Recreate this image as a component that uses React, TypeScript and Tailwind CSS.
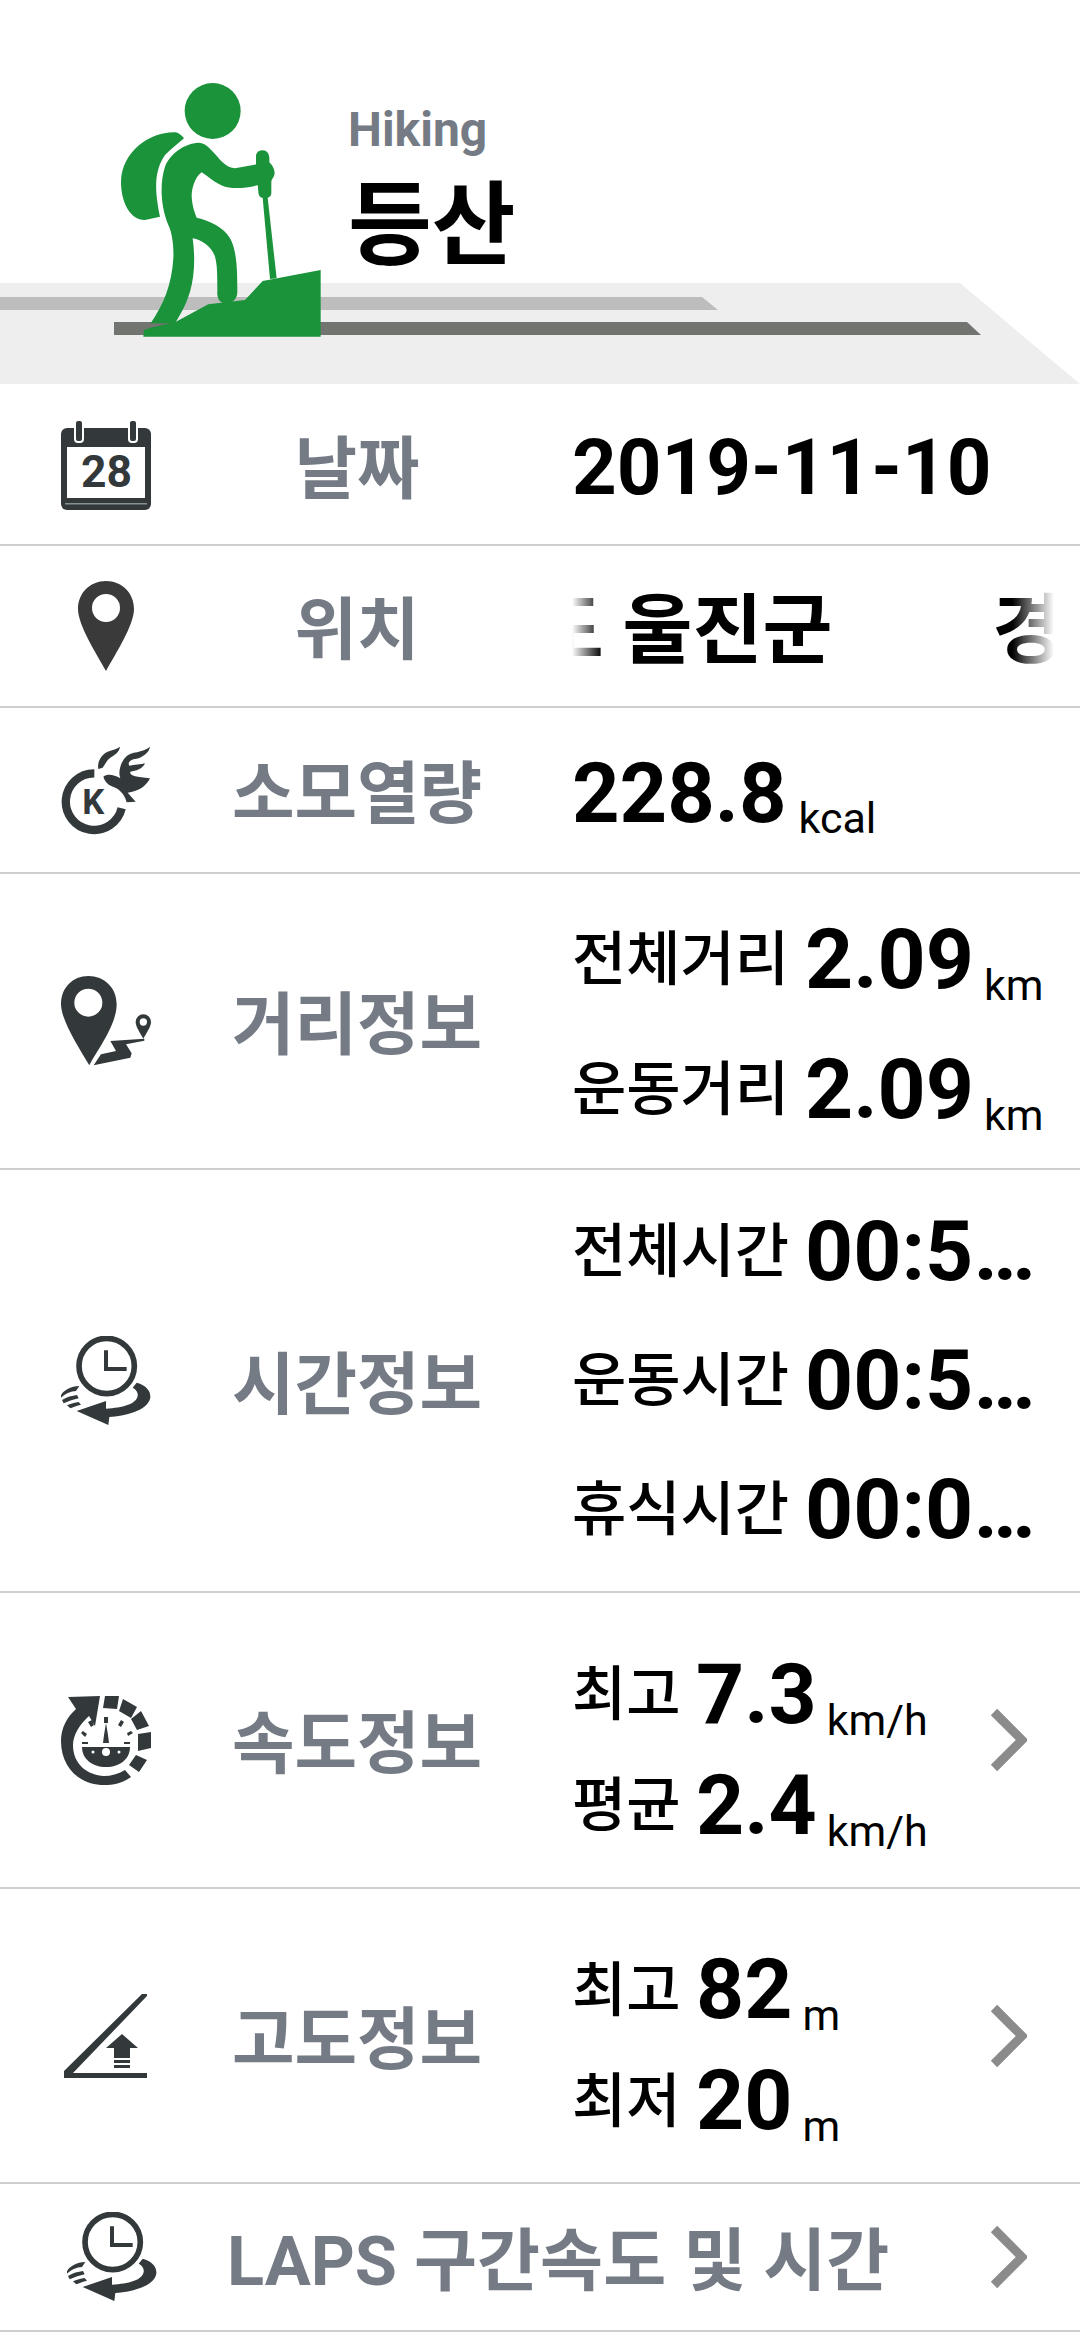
import React from "react";

const ink = "#33393b";

const ClockIcon = () => (
  <svg viewBox="0 0 270 270" className="w-[90px] h-[90px]" fill={ink}>
    <circle cx="137" cy="90" r="83" fill="none" stroke={ink} strokeWidth="17" />
    <path d="M129 43h12v50h56v12h-68z" />
    <path d="M227 140c28 8 43 24 41 45-8 40-78 55-123 58l-3 24-95-42 88-30v23c50-3 90-13 95-38 2-10-5-20-15-25z" />
    <path d="M0 178c5-13 30-28 55-28l-10 15c-15 0-35 10-45 20zM3 192c15-9 30-13 45-15l5 10c-15 3-30 8-45 15zM18 208c10-5 25-9 35-10l7 8c-12 3-24 7-32 11z" />
  </svg>
);

const Calendar = () => (
  <svg viewBox="0 0 90 90" className="w-[90px] h-[90px]">
    <path d="M6 8h78a6 6 0 0 1 6 6v70a6 6 0 0 1-6 6H6a6 6 0 0 1-6-6V14a6 6 0 0 1 6-6z" fill={ink} />
    <rect x="6" y="27" width="78" height="51" fill="#fff" />
    <rect x="14" y="0" width="8" height="22" rx="3" fill={ink} stroke="#fff" strokeWidth="2" />
    <rect x="68" y="0" width="8" height="22" rx="3" fill={ink} stroke="#fff" strokeWidth="2" />
    <rect x="4" y="83" width="82" height="1.5" fill="#8a8f90" />
    <text x="20" y="67" fontFamily="Roboto, sans-serif" fontWeight="700" fontSize="44" textLength="51" lengthAdjust="spacingAndGlyphs" fill={ink}>28</text>
  </svg>
);

const Pin = () => (
  <svg viewBox="0 0 56 90" className="w-[56px] h-[90px]">
    <path d="M28 0C12 0 0 12 0 28c0 16 18 44 28 62C38 72 56 44 56 28 56 12 44 0 28 0zm0 41a14 14 0 1 1 0-28 14 14 0 0 1 0 28z" fill="#3a3a3a" />
  </svg>
);

const Fire = () => (
  <svg viewBox="0 0 270 270" className="w-[90px] h-[90px]" fill={ink}>
    <path d="M100 85A85 85 0 1 0 182 190" fill="none" stroke={ink} strokeWidth="25" />
    <path d="M112 72c-4-17 6-42 28-52 15-6 28-8 37-15-2 17-17 25-29 33-10 7-14 17-23 30z" />
    <path d="M127 95c13-10 33-5 51 5-8-20 2-50 17-65 15-17 50-10 72-30-2 17-22 33-45 37-17 3-22 13-17 20 15-2 35-4 47-7-7 17-27 23-44 25-3 12 17 15 59 20-12 25-37 40-67 43l24 27-27 2c-7-27-25-42-45-48-12-6-22-16-25-29z" />
    <text x="97" y="208" textAnchor="middle" fontFamily="Roboto, sans-serif" fontWeight="700" fontSize="104" fill={ink}>K</text>
  </svg>
);

const Route = () => (
  <svg viewBox="0 0 270 270" className="w-[90px] h-[90px]" fill={ink}>
    <path fillRule="evenodd" d="M82 0C35 0 0 35 0 85c0 45 50 125 85 183 15-33 82-118 82-183C167 35 130 0 82 0zm0 38a42 42 0 1 1 0 84 42 42 0 0 1 0-84z" />
    <path d="M98 268l22-33 45-10-17-30 102-7v6l-55 11 17 27-4 13z" />
    <path fillRule="evenodd" d="M247 115a23 23 0 0 0-23 23c0 15 15 35 23 50 8-15 23-35 23-50a23 23 0 0 0-23-23zm0 12a11 11 0 1 1 0 22 11 11 0 0 1 0-22z" />
  </svg>
);

const Gauge = () => (
  <svg viewBox="0 0 90 90" className="w-[90px] h-[90px]" fill={ink}>
    <path d="M7 2l32-1-5 30-6-10C19 29 12 40 12 50c0 20 15 30 31 31 7 0 14-2 21-6l6 7c-8 6-17 8-27 8C18 90 0 72 0 46 0 33 6 22 15 14z" />
    <path d="M44 1h14l-2 13-14-1zM62 4l14 8-6 11-12-7zM80 16l8 15-12 4-6-11zM77 39l13-2v16l-13 3zM75 60l11 5-8 12-10-7z" />
    <path d="M21 52h48c0 12-10 20-24 20S21 64 21 52z" />
    <path d="M43 40l2-12 2 12 1 8h-6zM43 22h4v6h-4zM27 27l4-2 2 5-3 2zM60 25l3 2-3 5-3-2zM20 38l2-2 4 3-2 3zM70 36l2 2-5 3-1-3zM21 47h6v2h-6zM63 47h6v2h-6z" />
    <circle cx="45" cy="57" r="4" fill="#fff" />
    <circle cx="32" cy="57" r="1.5" fill="#fff" />
    <circle cx="58" cy="57" r="1.5" fill="#fff" />
  </svg>
);

const Slope = () => (
  <svg viewBox="0 0 84 84" className="w-[84px] h-[84px]" fill={ink}>
    <path d="M0 84v-7L78 0h5v2L9 79h74v5z" />
    <path d="M58 40l16 14h-8v10H50V54h-8z" />
    <rect x="50" y="66" width="16" height="3" />
    <rect x="50" y="71" width="16" height="3" />
  </svg>
);

const Chevron = () => (
  <svg viewBox="0 0 38 64" className="w-[38px] h-[64px] shrink-0">
    <path d="M5 4l28 28L5 60" fill="none" stroke="#8b8b8b" strokeWidth="9" />
  </svg>
);

const Hiker = () => (
  <svg viewBox="0 0 660 810" className="absolute left-[110px] top-[75px] w-[220px] h-[270px]" fill="#1a933a">
    <circle cx="308" cy="108" r="84" />
    <path d="M195 172C120 170 35 230 33 320c0 60 27 115 72 115l45-10c-15-75-20-135 15-185 20-20 40-35 57-50-7-10-17-17-27-18z" />
    <path d="M265 203c20 0 35 17 50 34 20 23 35 41 60 43l65-12 5 62c-35 10-75 12-100 5-30-10-50-30-70-43-20 13-30 48-30 73 2 30 10 50 15 63 40 10 80 27 100 62 20 35 22 90 22 160 0 25-17 35-37 35-15 0-25-15-23-35 0-50 0-80-7-105-10-30-40-50-67-55 7 50 7 110-8 160-12 40-30 70-45 95h-73c38-55 63-115 68-195 2-40-5-80-15-100-25-60-25-130-10-175 15-40 60-70 100-72z" />
    <path d="M458 226c12 0 20 9 20 24v12c14 13 22 33 10 48l-4 8v37c0 7-6 13-11 13l27 242-20 2-22-244c-8 0-13-8-13-18l-7-80v-25c0-13 9-19 20-19z" />
    <path d="M100 785l2-20 20-7 73-16 100-54 110-13 53-57 174-33v200z" />
  </svg>
);

const Row = ({ h, icon, label, children }: { h: string; icon: React.ReactNode; label: string; children: React.ReactNode }) => (
  <div className={`${h} flex items-center border-b-2 border-[#cfcfcf]`}>
    <div className="w-[90px] ml-[61px] flex justify-center shrink-0">{icon}</div>
    <div className="text-[68px] leading-none pt-[10px] font-bold text-[#757b85] text-center w-[412px] mr-[9px]">{label}</div>
    {children}
  </div>
);

const Stat = ({ label, value, unit, w }: { label: string; value: string; unit?: string; w?: string }) => (
  <div className="flex items-center">
    <span className={`text-[59px] leading-none font-medium text-black ${w ?? "w-[233px]"}`}>{label}</span>
    <span className="text-[84px] leading-none font-bold text-black">{value}</span>
    {unit && <span className="text-[43px] leading-none text-black ml-[10px] self-end -mb-[5px]">{unit}</span>}
  </div>
);

export default function App() {
  return (
    <div className="w-[1080px] h-[2332px] bg-white overflow-hidden font-['Roboto','Noto_Sans_CJK_KR',sans-serif]">
      <header className="relative h-[386px]">
        <svg viewBox="0 0 1080 101" preserveAspectRatio="none" className="absolute left-0 top-[283px] w-[1080px] h-[101px]">
          <path d="M0 0H960L1080 101H0z" fill="#eeeeee" />
          <path d="M0 14H702L718 27H0z" fill="#bdbdbd" />
          <path d="M114 39H967L981 52H114z" fill="#71746f" />
        </svg>
        <Hiker />
        <div className="relative pl-[348px] pt-[106px]">
          <div className="text-[48px] leading-[48px] font-bold text-[#757b85]">Hiking</div>
          <div className="text-[91px] leading-[91px] font-bold text-black mt-[27px]">등산</div>
        </div>
      </header>

      <Row h="h-[160px]" icon={<Calendar />} label="날짜">
        <span className="text-[78px] leading-none font-bold text-black pt-[6px]">2019-11-10</span>
      </Row>

      <Row h="h-[162px]" icon={<Pin />} label="위치">
        <div className="relative w-[482px] overflow-hidden mt-[10px]">
          <div className="whitespace-nowrap text-[76px] leading-[88px] font-bold text-black -ml-[248px]">
            경상북도 울진군<span className="ml-[160px]">경상북도</span>
          </div>
          <div className="absolute inset-y-0 left-0 w-[30px] bg-gradient-to-r from-white to-transparent" />
          <div className="absolute inset-y-0 right-0 w-[42px] bg-gradient-to-l from-white to-transparent" />
        </div>
      </Row>

      <Row h="h-[166px]" icon={<Fire />} label="소모열량">
        <div className="flex pt-[6px]">
          <span className="text-[83px] leading-none font-bold text-black">228.8</span>
          <span className="text-[43px] leading-none text-black ml-[12px] self-end -mb-[5px]">kcal</span>
        </div>
      </Row>

      <Row h="h-[296px]" icon={<Route />} label="거리정보">
        <div className="flex flex-col gap-[46px] pt-[7px]">
          <Stat label="전체거리" value="2.09" unit="km" />
          <Stat label="운동거리" value="2.09" unit="km" />
        </div>
      </Row>

      <Row h="h-[423px]" icon={<ClockIcon />} label="시간정보">
        <div className="flex flex-col gap-[45px]">
          <Stat label="전체시간" value="00:5…" />
          <Stat label="운동시간" value="00:5…" />
          <Stat label="휴식시간" value="00:0…" />
        </div>
      </Row>

      <Row h="h-[296px]" icon={<Gauge />} label="속도정보">
        <div className="flex flex-col gap-[27px] w-[417px] pt-[20px]">
          <Stat label="최고" value="7.3" unit="km/h" w="w-[124px]" />
          <Stat label="평균" value="2.4" unit="km/h" w="w-[124px]" />
        </div>
        <Chevron />
      </Row>

      <Row h="h-[295px]" icon={<Slope />} label="고도정보">
        <div className="flex flex-col gap-[27px] w-[417px] pt-[20px]">
          <Stat label="최고" value="82" unit="m" w="w-[124px]" />
          <Stat label="최저" value="20" unit="m" w="w-[124px]" />
        </div>
        <Chevron />
      </Row>

      <div className="h-[148px] flex items-center border-b-2 border-[#cfcfcf]">
        <div className="w-[90px] ml-[67px] shrink-0"><ClockIcon /></div>
        <div className="text-[68.5px] leading-none pt-[10px] font-bold text-[#757b85] ml-[70px] w-[762px] whitespace-nowrap">LAPS 구간속도 및 시간</div>
        <Chevron />
      </div>
    </div>
  );
}
